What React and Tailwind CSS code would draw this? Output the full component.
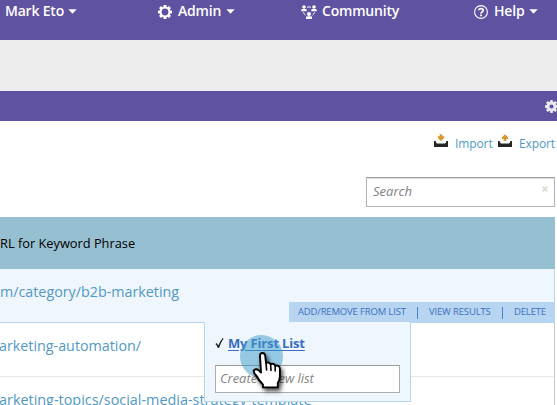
import React from 'react';

const Caret = ({ className = '' }) => (
  <svg className={`h-[5px] w-[9px] shrink-0 ${className}`} viewBox="0 0 9 5">
    <path d="M0.3 0.2h8.4L4.5 4.8z" fill="#fff" />
  </svg>
);

const Teeth = ({ fill }) => (
  <g fill={fill}>
    {[0, 45, 90, 135, 180, 225, 270, 315].map((a) => (
      <rect key={a} x="-1.5" y="-7" width="3" height="3" rx="0.5" transform={`rotate(${a})`} />
    ))}
  </g>
);

const GearOutline = () => (
  <svg className="mt-[5px] h-[14px] w-[14px] shrink-0" viewBox="-7 -7 14 14">
    <Teeth fill="#fff" />
    <circle r="4.4" fill="none" stroke="#fff" strokeWidth="2" />
  </svg>
);

const GearSolid = () => (
  <svg className="h-[13px] w-[13px] shrink-0" viewBox="-7 -7 14 14">
    <Teeth fill="#e9e7ef" />
    <circle r="3.8" fill="none" stroke="#e9e7ef" strokeWidth="3.2" />
  </svg>
);

const People = () => (
  <svg className="mt-[5px] h-[14px] w-[16px] shrink-0" viewBox="0 0 16 14" fill="#fff">
    <circle cx="3" cy="2" r="1.8" />
    <path d="M0.3 6.2V5Q0.3 4 1.5 4h3Q5.7 4 5.7 5v1.2z" />
    <circle cx="13" cy="2" r="1.8" />
    <path d="M10.3 6.2V5q0-1 1.2-1h3q1.2 0 1.2 1v1.2z" />
    <circle cx="8" cy="9" r="2" />
    <path d="M5 14v-1.5q0-1.2 1.2-1.2h3.6q1.2 0 1.2 1.2V14z" />
    <path d="M6 2.3q2-1 4 0M2.5 7.3q.4 1.8 2 2.9M13.5 7.3q-.4 1.8-2 2.9" fill="none" stroke="#fff" />
  </svg>
);

const HelpIcon = () => (
  <svg className="mt-[5px] h-[14px] w-[14px] shrink-0" viewBox="0 0 14 14" fill="none" stroke="#fff">
    <circle cx="7" cy="7" r="6.4" strokeWidth="1.1" />
    <path d="M4.8 5.3Q4.9 3.6 7 3.6t2.2 1.7Q9.2 6.3 8 7T7 8.7" strokeWidth="1.7" />
    <path d="M6.1 10.4h1.8" strokeWidth="1.6" />
  </svg>
);

const Tray = ({ up }) => (
  <svg className="h-[14px] w-[14px] shrink-0" viewBox="0 0 14 14">
    <path
      d={up ? 'M7 0.3L10.3 3.7V5H8.3V7H5.7V5H3.7V3.7z' : 'M5.7 0.3H8.3V2.3H10.3V3.7L7 7L3.7 3.7V2.3H5.7z'}
      fill="#d8962f"
    />
    <path d="M0 7h2v2h10V7h2v6H0z" fill="#262626" />
    <path d="M2 7.3L3 9.3H11L12 7.3" fill="none" stroke="#d9ddd9" strokeWidth="0.8" />
  </svg>
);

const Hand = () => (
  <svg
    className="absolute left-[46px] top-[28px] h-[46px] w-[38px] overflow-visible drop-shadow-[2px_3px_2px_rgba(0,0,0,0.7)]"
    viewBox="0 0 38 46"
  >
    <path
      d="M9 5.2Q9.3 3 11.5 3Q13.8 3 14.2 5.6L15 13Q18 11.4 19.6 14.2Q22.8 12.9 24.2 15.7Q28.2 14.8 28.9 18.4V26.5Q28.7 30 26.8 33V37.4H12V34.6Q7.4 30 5.6 26Q2.6 23.2 2.6 20.8Q4.6 18 7.8 20.4L10 22.6z"
      fill="#fff"
      stroke="#000"
      strokeWidth="1.9"
      strokeLinejoin="round"
    />
    <path d="M15 12.5L15.6 20M19.6 14L20 20.5M24.2 15.6V21" stroke="#000" strokeWidth="1.6" strokeLinecap="round" fill="none" />
  </svg>
);

const ListMenu = () => (
  <div className="absolute left-[204px] top-[53px] h-[80px] w-[207px] border-x border-b border-[#b5d5ee] bg-[#eff6fd] px-[10px]">
    <div className="flex h-[43px] items-center pb-[2px]">
      <svg className="h-[12px] w-[9px]" viewBox="0 0 9 12">
        <path d="M0.4 7L1.8 6.1L3.2 8.5Q5 4 7.8 1L8.6 1.4Q5.5 6 4 11H2.8Q2 8.5 0.4 7z" fill="#222" />
      </svg>
      <a className="ml-[4px] whitespace-nowrap text-[13px] font-bold leading-[18px] tracking-[-0.16px] text-[#386dc2] underline underline-offset-2">
        My First List
      </a>
    </div>
    <div className="flex h-[28px] items-center whitespace-nowrap border border-[#adadad] border-t-[#999] bg-white pl-[4px] text-[13px] italic tracking-[-0.05px] text-[#858585]">
      Create a new list
    </div>
    <div className="absolute left-[35px] top-[13px] h-[43px] w-[43px] rounded-full bg-[#3c9aca]/50" />
    <Hand />
  </div>
);

const Toolbar = () => (
  <div className="absolute right-0 top-[33px] flex h-[21px] w-[265px] items-center bg-[#b7d5f0] pl-[9px] text-[9.5px] tracking-[-0.16px] text-[#3b6fc0]">
    <span className="w-[119px] whitespace-nowrap">ADD/REMOVE FROM LIST</span>
    <span className="h-[12px] w-px bg-[#4b7fca]" />
    <span className="ml-[11px] w-[73px] whitespace-nowrap">VIEW RESULTS</span>
    <span className="h-[12px] w-px bg-[#4b7fca]" />
    <span className="ml-[11px] whitespace-nowrap">DELETE</span>
  </div>
);

export default function App() {
  return (
    <div className="h-[405px] w-[557px] overflow-hidden bg-white font-['Open_Sans',sans-serif]">
      <header className="flex h-[40px] items-start bg-[#5f52a0] text-[14px] font-semibold leading-[22px] tracking-[-0.2px] text-white">
        <div className="flex w-[153px] pl-[5px]">
          <span>Mark Eto</span>
          <Caret className="ml-[4px] mt-[9px]" />
        </div>
        <div className="flex w-[143px] pl-[5px]">
          <GearOutline />
          <span className="ml-[6px]">Admin</span>
          <Caret className="ml-[5px] mt-[9px]" />
        </div>
        <div className="flex w-[173px] pl-[5px]">
          <People />
          <span className="ml-[5px]">Community</span>
        </div>
        <div className="flex pl-[5px]">
          <HelpIcon />
          <span className="ml-[6px]">Help</span>
          <Caret className="ml-[5px] mt-[9px]" />
        </div>
      </header>
      <div className="h-[51px] bg-[#ededed]" />
      <div className="flex h-[30px] items-center bg-[#5f52a0] pl-[545px]">
        <GearSolid />
      </div>

      <section className="h-[96px] pr-[2px]">
        <div className="flex h-[56px] pl-[434px] pt-[13px] text-[12px] leading-[20px] text-[#5199c4]">
          <Tray />
          <span className="ml-[7px] w-[43px] tracking-[-0.1px]">Import</span>
          <Tray up />
          <span className="ml-[7px] tracking-[-0.1px]">Export</span>
        </div>
        <div className="ml-[366px] flex h-[30px] w-[189px] items-center justify-between border border-[#b3b3b3] border-t-[#a0a0a0] bg-white pl-[6px] pr-[6px] shadow-[inset_0_1px_0_#dedede]">
          <span className="text-[13px] italic text-[#808080]">Search</span>
          <svg className="mb-[7px] h-[6px] w-[6px]" viewBox="0 0 6 6">
            <path d="M0.7 0.7L5.3 5.3M5.3 0.7L0.7 5.3" stroke="#dcdcd2" strokeWidth="1.8" />
          </svg>
        </div>
      </section>

      <main className="w-[555px]">
        <div className="flex h-[52px] items-center bg-[#96bfd1] pt-px text-[12.8px] text-black">
          RL for Keyword Phrase
        </div>
        <div className="relative z-10 h-[54px] border-b border-r border-[#b5d5ee] bg-[#eff6fd]">
          <div className="pt-[13px] text-[14.3px] leading-[20px] text-[#5199c4]">m/category/b2b-marketing</div>
          <Toolbar />
          <ListMenu />
        </div>
        <div className="h-[54px] border-b border-r border-b-[#e6e6e6] border-r-[#c8c8c8] pt-[13px] text-[14.3px] leading-[20px] text-[#5199c4]">
          <span className="-ml-px">arketing-automation/</span>
        </div>
        <div className="h-[54px] border-r border-[#c8c8c8] pt-[13px] text-[14.4px] leading-[20px] text-[#5199c4]">
          <span className="-ml-px">arketing-topics/social-media-strategy-template</span>
        </div>
      </main>
    </div>
  );
}
